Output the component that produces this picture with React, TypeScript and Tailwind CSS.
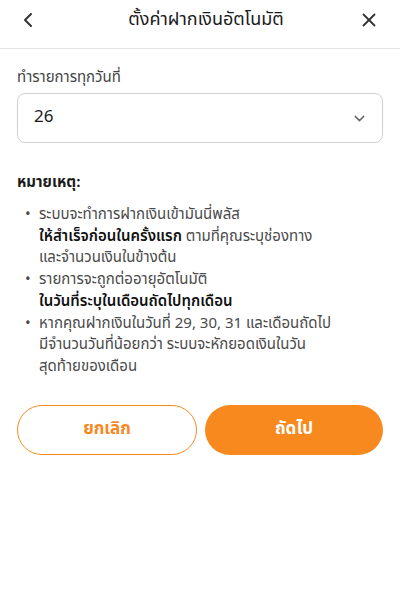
import { ChevronLeft, ChevronDown, X } from "lucide-react";

const font = { fontFamily: '"Noto Sans Thai", "Noto Sans", "Liberation Sans", sans-serif' };

const notes = [
  {
    parts: [
      { t: "ระบบจะทำการฝากเงินเข้ามันนี่พลัส", b: false, br: true },
      { t: "ให้สำเร็จก่อนในครั้งแรก", b: true },
      { t: " ตามที่คุณระบุช่องทาง", b: false, br: true },
      { t: "และจำนวนเงินในข้างต้น", b: false },
    ],
  },
  {
    parts: [
      { t: "รายการจะถูกต่ออายุอัตโนมัติ", b: false, br: true },
      { t: "ในวันที่ระบุในเดือนถัดไปทุกเดือน", b: true },
    ],
  },
  {
    parts: [
      { t: "หากคุณฝากเงินในวันที่ 29, 30, 31 และเดือนถัดไป", b: false, br: true },
      { t: "มีจำนวนวันที่น้อยกว่า ระบบจะหักยอดเงินในวัน", b: false, br: true },
      { t: "สุดท้ายของเดือน", b: false },
    ],
  },
];

export default function App() {
  return (
    <div className="w-[400px] h-[600px] bg-white text-[#1b1b1b]" style={font}>
      {/* header */}
      <div className="h-[49px] border-b border-[#e6e6e6]">
        <div className="h-[40px] grid grid-cols-[1fr_auto_1fr] items-center pl-[16px] pr-[20px]">
          <ChevronLeft size={24} strokeWidth={2} className="text-[#333]" />
          <div className="text-[18px] leading-[24px] ml-[16px]">ตั้งค่าฝากเงินอัตโนมัติ</div>
          <X size={22} strokeWidth={2} className="text-[#333] justify-self-end" />
        </div>
      </div>

      <div className="px-[17px]">
        <div className="mt-[18px] text-[15px] text-[#444] leading-[22px]">ทำรายการทุกวันที่</div>
        <div className="mt-[4px] h-[50px] rounded-[8px] border border-[#cfcfcf] flex items-center justify-between pl-[16px] pr-[14px]">
          <span className="text-[17px]">26</span>
          <ChevronDown size={17} strokeWidth={2} className="text-[#666]" />
        </div>

        <div className="mt-[29px] text-[15px] font-bold leading-[22px]">หมายเหตุ:</div>
        <ul className="mt-[10px] text-[15px] leading-[21.7px] text-[#4a4a4a]">
          {notes.map((n, i) => (
            <li key={i} className="flex">
              <span className="w-[22px] pl-[8px] shrink-0">•</span>
              <span>
                {n.parts.map((p, j) => (
                  <span key={j}>
                    <span className={p.b ? "font-semibold text-[#111]" : ""}>{p.t}</span>
                    {p.br && <br />}
                  </span>
                ))}
              </span>
            </li>
          ))}
        </ul>

        <div className="mt-[27px] flex gap-[8px]">
          <button className="flex-1 h-[50px] rounded-full border border-[#f7891f] text-[#f7891f] text-[17px] font-bold">
            ยกเลิก
          </button>
          <button className="flex-1 h-[50px] rounded-full bg-[#f7891f] text-white text-[17px] font-bold">
            ถัดไป
          </button>
        </div>
      </div>
    </div>
  );
}
